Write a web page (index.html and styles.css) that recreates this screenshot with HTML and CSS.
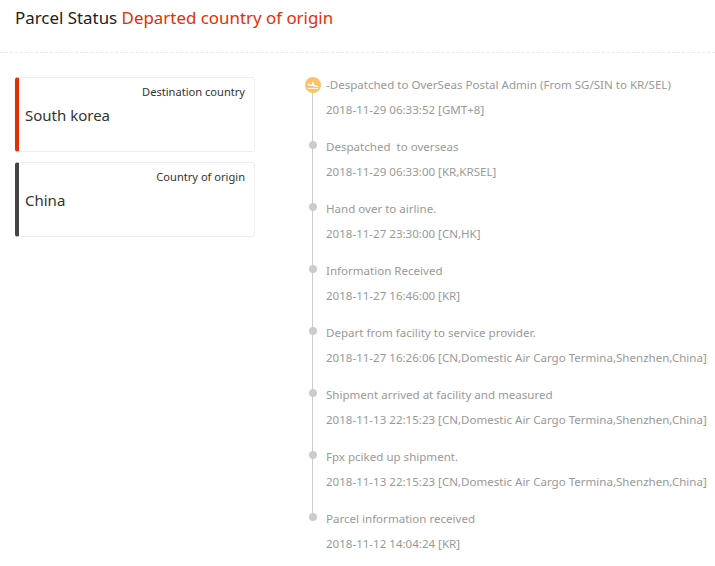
FILE: index.html
```html
<!DOCTYPE html>
<html lang="en">
<head>
<meta charset="utf-8">
<title>Parcel Status</title>
<link rel="stylesheet" href="styles.css">
</head>
<body>
<header class="header">
  <h1 class="title">Parcel Status <span class="status">Departed country of origin</span></h1>
</header>
<main class="content">
  <section class="cards">
    <div class="card card-dest">
      <div class="card-label">Destination country</div>
      <div class="card-value">South korea</div>
    </div>
    <div class="card card-origin">
      <div class="card-label">Country of origin</div>
      <div class="card-value">China</div>
    </div>
  </section>
  <ol class="timeline">
    <li class="event event-current">
      <span class="badge"><svg viewBox="0 0 24 24" width="14" height="14"><path fill="#fff" transform="translate(0 5) scale(1 .65)" d="M19.340 15.850c.8.210 1.620-.26 1.840-1.060.21-.8-.26-1.620-1.060-1.840l-5.310-1.420-2.760-9.020L10.120 2v8.280L5.150 8.950l-.93-2.320-1.450-.39v5.170l16.570 4.440z"/><path fill="#fff" d="M3 17h18v1.500H3z"/></svg></span>
      <p class="event-title">-Despatched to OverSeas Postal Admin (From SG/SIN to KR/SEL)</p>
      <p class="event-meta">2018-11-29 06:33:52 [GMT+8]</p>
    </li>
    <li class="event">
      <p class="event-title">Despatched&nbsp; to overseas</p>
      <p class="event-meta">2018-11-29 06:33:00 [KR,KRSEL]</p>
    </li>
    <li class="event">
      <p class="event-title">Hand over to airline.</p>
      <p class="event-meta">2018-11-27 23:30:00 [CN,HK]</p>
    </li>
    <li class="event">
      <p class="event-title">Information Received</p>
      <p class="event-meta">2018-11-27 16:46:00 [KR]</p>
    </li>
    <li class="event">
      <p class="event-title">Depart from facility to service provider.</p>
      <p class="event-meta">2018-11-27 16:26:06 [CN,Domestic Air Cargo Termina,Shenzhen,China]</p>
    </li>
    <li class="event">
      <p class="event-title">Shipment arrived at facility and measured</p>
      <p class="event-meta">2018-11-13 22:15:23 [CN,Domestic Air Cargo Termina,Shenzhen,China]</p>
    </li>
    <li class="event">
      <p class="event-title">Fpx pciked up shipment.</p>
      <p class="event-meta">2018-11-13 22:15:23 [CN,Domestic Air Cargo Termina,Shenzhen,China]</p>
    </li>
    <li class="event event-last">
      <p class="event-title">Parcel information received</p>
      <p class="event-meta">2018-11-12 14:04:24 [KR]</p>
    </li>
  </ol>
</main>
</body>
</html>
```
FILE: styles.css
```css
* { box-sizing: border-box; }
html, body { margin: 0; padding: 0; }
body {
  width: 715px;
  height: 566px;
  overflow: hidden;
  background: #fff;
  font-family: "Noto Sans", "Open Sans", sans-serif;
  color: #333;
}
.header {
  height: 53px;
  padding: 6px 15px 0;
  border-bottom: 1px dashed #eaeaea;
}
.title {
  margin: 0;
  font-size: 16.9px;
  line-height: 24px;
  font-weight: 400;
  color: #222;
}
.status { color: #e62e04; }
.content {
  display: flex;
  padding: 24px 0 0 15px;
}
.cards {
  flex: none;
  width: 240px;
  display: flex;
  flex-direction: column;
  gap: 10px;
}
.card {
  height: 75px;
  padding: 5px 9px 0 6px;
  border: 1px solid #eee;
  border-left: 4px solid #e62e04;
  border-radius: 3px;
}
.card-origin { border-left-color: #444; }
.card-label {
  font-size: 11.1px;
  line-height: 18px;
  text-align: right;
  color: #333;
}
.card-value {
  margin-top: 2px;
  font-size: 15px;
  line-height: 24px;
  color: #333;
}
.timeline {
  list-style: none;
  margin: 0 0 0 50px;
  padding: 0;
  flex: 1;
}
.event {
  position: relative;
  height: 62px;
  padding: 0 0 0 21px;
}
.event::before {
  content: "";
  position: absolute;
  left: 7px;
  top: 8px;
  bottom: -8px;
  width: 1px;
  background: #ccc;
}
.event-last::before { display: none; }
.event::after {
  content: "";
  position: absolute;
  left: 4px;
  top: 2px;
  width: 8px;
  height: 8px;
  border-radius: 50%;
  background: #ccc;
}
.event-current::after { display: none; }
.badge {
  position: absolute;
  z-index: 1;
  left: 0;
  top: 0;
  width: 16px;
  height: 16px;
  border-radius: 50%;
  background: #fdc266;
  display: flex;
  align-items: center;
  justify-content: center;
}
.event-title, .event-meta {
  margin: 0;
  font-size: 11.55px;
  line-height: 15px;
  color: #999;
  white-space: nowrap;
}
.event-meta { margin-top: 10px; }
```
